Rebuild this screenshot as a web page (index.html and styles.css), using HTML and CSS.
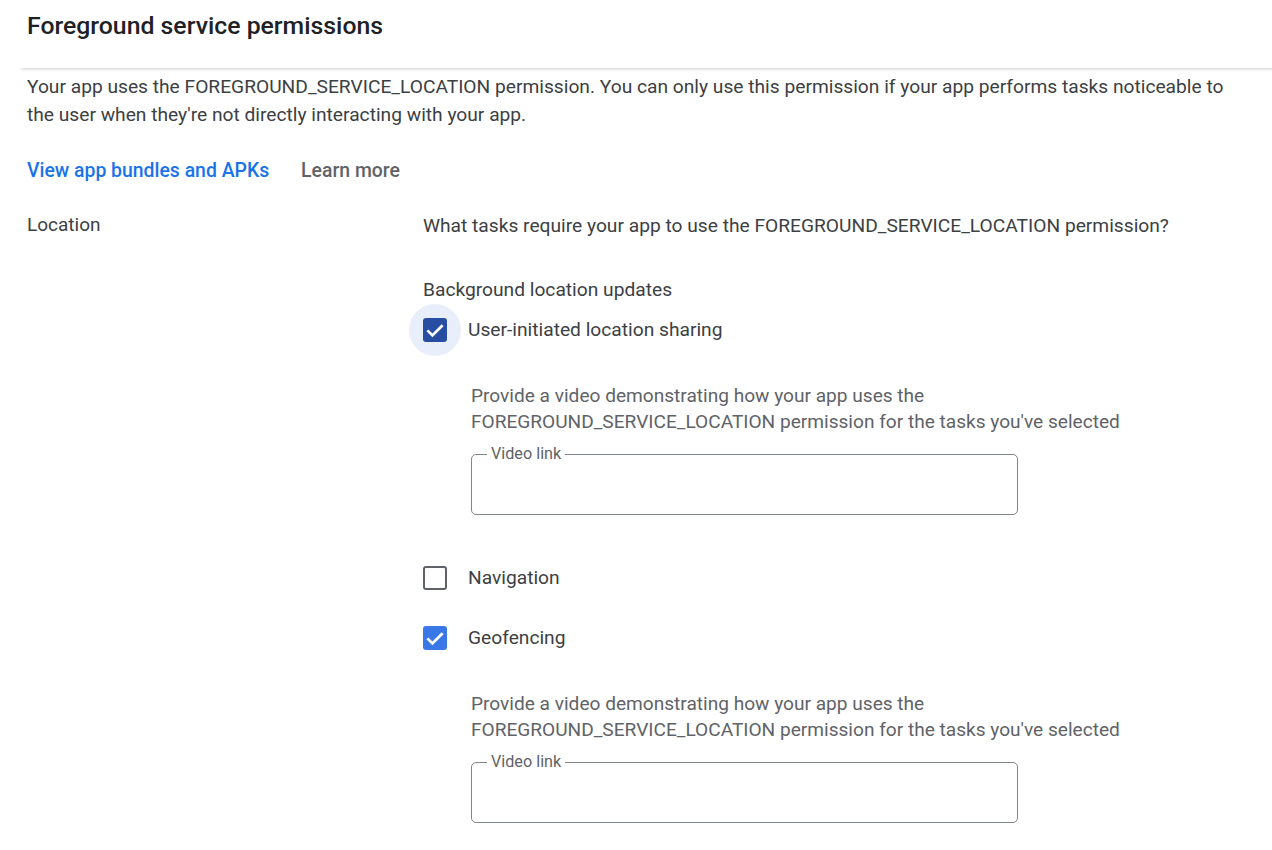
FILE: index.html
```html
<!DOCTYPE html>
<html lang="en">
<head>
<meta charset="utf-8">
<title>Foreground service permissions</title>
<link rel="stylesheet" href="styles.css">
</head>
<body>
<header class="page-header">
  <h1 class="page-title">Foreground service permissions</h1>
</header>

<main class="content">
  <p class="intro">Your app uses the FOREGROUND_SERVICE_LOCATION permission. You can only use this permission if your app performs tasks noticeable to the user when they're not directly interacting with your app.</p>

  <div class="links">
    <a class="link-primary" href="#">View app bundles and APKs</a>
    <a class="link-secondary" href="#">Learn more</a>
  </div>

  <section class="perm-row">
    <div class="perm-label">Location</div>
    <div class="perm-body">
      <p class="question">What tasks require your app to use the FOREGROUND_SERVICE_LOCATION permission?</p>

      <div class="group-title">Background location updates</div>

      <label class="option option-first">
        <span class="checkbox-halo">
          <span class="checkbox checked focused">
            <svg viewBox="0 0 24 24" class="tick"><path d="M4.4 12.4l5 5 10.2-10.2" /></svg>
          </span>
        </span>
        <span class="option-text">User-initiated location sharing</span>
      </label>
      <div class="video-block">
        <p class="video-hint">Provide a video demonstrating how your app uses the<br>FOREGROUND_SERVICE_LOCATION permission for the tasks you've selected</p>
        <fieldset class="field">
          <legend class="field-label">Video link</legend>
        </fieldset>
      </div>

      <label class="option option-nav">
        <span class="checkbox"></span>
        <span class="option-text">Navigation</span>
      </label>

      <label class="option option-geo">
        <span class="checkbox checked">
          <svg viewBox="0 0 24 24" class="tick"><path d="M4.4 12.4l5 5 10.2-10.2" /></svg>
        </span>
        <span class="option-text">Geofencing</span>
      </label>
      <div class="video-block">
        <p class="video-hint">Provide a video demonstrating how your app uses the<br>FOREGROUND_SERVICE_LOCATION permission for the tasks you've selected</p>
        <fieldset class="field">
          <legend class="field-label">Video link</legend>
        </fieldset>
      </div>
    </div>
  </section>
</main>
</body>
</html>
```

FILE: styles.css
```css
* { box-sizing: border-box; }

html, body {
  margin: 0;
  padding: 0;
  background: #fff;
}

body {
  font-family: Roboto, "Liberation Sans", Arial, sans-serif;
  color: #3c4043;
  font-size: 19px;
  overflow: hidden;
}

/* Sticky-style page header with its soft bottom shadow */
.page-header {
  height: 68px;
  padding: 10px 27px 0;
  position: relative;
  z-index: 1;
  background: #fff;
  box-shadow: 20px 2px 3px -1px rgba(60, 64, 67, 0.25);
}

.page-title {
  margin: 0;
  font-size: 24.8px;
  font-weight: 500;
  line-height: 32px;
  color: #202124;
}

.content {
  padding: 0 27px;
}

.intro {
  margin: 5px 0 0;
  line-height: 28px;
  font-size: 19.2px;
  color: #3c4043;
}

.links {
  display: flex;
  gap: 32px;
  margin-top: 30px;
  line-height: 24px;
  font-size: 19.4px;
  font-weight: 500;
}

.links a { text-decoration: none; }
.link-primary { color: #1a73e8; }
.link-secondary { color: #5f6368; }

.perm-row {
  display: grid;
  grid-template-columns: 396px 1fr;
  margin-top: 30px;
}

.perm-label {
  line-height: 24px;
  font-size: 19px;
}

.perm-body {
  font-size: 19.2px;
}

.question {
  margin: 1px 0 0;
  line-height: 24px;
}

.group-title {
  margin-top: 40px;
  line-height: 24px;
}

.option {
  display: flex;
  align-items: center;
  gap: 21px;
  height: 40px;
}

.option-first { margin-top: 8px; }
.option-nav { margin-top: 43px; }
.option-geo { margin-top: 20px; }

/* Focus ring drawn around the active checkbox */
.checkbox-halo {
  display: flex;
  flex: none;
  margin: -14px;
  padding: 14px;
  border-radius: 50%;
  background: #e8eefa;
}

.checkbox {
  flex: none;
  width: 24px;
  height: 24px;
  border: 2.5px solid #5f6368;
  border-radius: 3px;
  display: flex;
  align-items: center;
  justify-content: center;
}

.checkbox.checked {
  border: none;
  background: #3b78e7;
}

.checkbox.focused {
  background: #284ea3;
}

.tick {
  width: 24px;
  height: 24px;
}

.tick path {
  fill: none;
  stroke: #fff;
  stroke-width: 2.7;
}

.option-text {
  line-height: 24px;
  color: #3c4043;
}

.video-block {
  padding-left: 48px;
  margin-top: 33px;
}

.video-hint {
  margin: 0;
  line-height: 26px;
  font-size: 19.1px;
  color: #5f6368;
}

.field {
  margin: 12px 0 0;
  width: 547px;
  height: 68px;
  border: 1px solid #80868b;
  border-radius: 5px;
  padding: 0 16px;
}

.field-label {
  padding: 0 4px;
  margin-left: -1px;
  font-size: 16.2px;
  line-height: 14px;
  color: #5f6368;
}
```
